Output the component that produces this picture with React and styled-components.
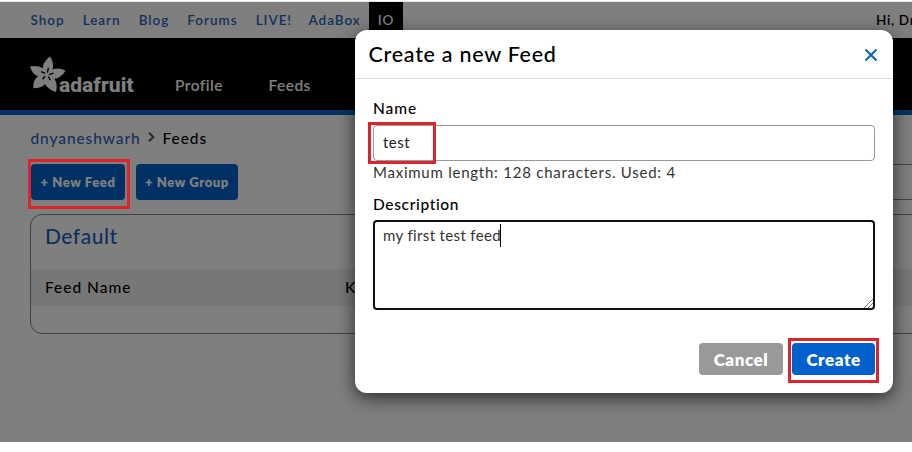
import React from 'react';
import styled, { createGlobalStyle } from 'styled-components';

const GlobalStyle = createGlobalStyle`
  * { box-sizing: border-box; }
  body {
    margin: 0;
    background: #fff;
    overflow: hidden;
    font-family: Lato, "Open Sans", sans-serif;
    font-weight: 500;
    color: #000;
  }
`;

const Window = styled.div`
  position: relative;
  width: 912px;
  height: 452px;
  overflow: hidden;
  padding-top: 2px;
  background: linear-gradient(#fff 1px, #e3e5e8 1px, #e3e5e8 2px, #fff 2px);
`;

const Page = styled.div`
  height: 440px;
  background: #fff;
`;

const TopBar = styled.nav`
  display: flex;
  align-items: stretch;
  height: 36px;
  padding-left: 30.5px;
  font-size: 13.5px;
  font-weight: 600;
  line-height: 37px;
  letter-spacing: 0.95px;
  white-space: nowrap;
`;

const TopLink = styled.a`
  margin-right: 18.2px;
  color: #2a62b4;

  &:nth-of-type(5) {
    margin-right: 16.5px;
  }

  &:last-of-type {
    margin-right: 0;
  }
`;

const TopActive = styled.span`
  width: 34px;
  margin-left: 8px;
  padding-left: 9px;
  background: #000;
  color: #fff;
`;

const Greeting = styled.span`
  margin-left: auto;
  width: 36px;
  overflow: hidden;
  letter-spacing: 0.7px;
`;

const Header = styled.header`
  display: flex;
  height: 77px;
  padding-left: 30px;
  background: #000;
  border-bottom: 5px solid #0066c8;
`;

const Logo = styled.div`
  display: flex;
  width: 145px;
  padding-top: 18px;
  color: #fff;
`;

const LogoText = styled.span`
  margin: 17px 0 0 -8px;
  font: 800 21px/24px Roboto, sans-serif;
  letter-spacing: 0.05px;
`;

const HeaderLink = styled.a`
  width: 93.5px;
  padding-top: 37px;
  color: #fff;
  font-size: 15.5px;
  font-weight: 600;
  line-height: 20px;
  letter-spacing: 0.45px;
`;

const Breadcrumb = styled.div`
  display: flex;
  align-items: center;
  height: 49px;
  padding: 0 0 3px 30.5px;
  font-size: 15.5px;
  letter-spacing: 0.9px;

  svg { margin: 0 7px 2px 6px; }
`;

const CrumbLink = styled.a`
  color: #2a62b4;
`;

const Actions = styled.div`
  display: flex;
  gap: 11px;
  height: 35px;
  padding-left: 31px;
`;

const ActionButton = styled.button`
  width: ${(p) => p.$width}px;
  height: 36px;
  padding: 0;
  border: 0;
  border-radius: 4px;
  background: #0061c8;
  color: #fff;
  font: 800 13px/37px Lato, sans-serif;
  letter-spacing: 0.6px;
  white-space: nowrap;
`;

const SearchField = styled.div`
  width: 240px;
  height: 36px;
  margin-left: auto;
  border: 1px solid #8b8b8b;
  border-right: 0;
`;

const Panel = styled.section`
  height: 120px;
  margin: 15px -20px 0 30px;
  border: 1px solid #858585;
  border-radius: 12px;
`;

const PanelTitle = styled.h2`
  height: 54px;
  margin: 0;
  padding-left: 14px;
  color: #1a60b8;
  font-size: 21px;
  font-weight: 500;
  line-height: 41px;
  letter-spacing: 0.5px;
`;

const TableHead = styled.div`
  display: grid;
  grid-template-columns: 300px 1fr;
  height: 37px;
  padding-left: 14px;
  background: #efefef;
  font-size: 15.5px;
  line-height: 37px;
  letter-spacing: 1px;
`;

const Backdrop = styled.div`
  position: absolute;
  inset: 2px 0 10px;
  background: rgba(0, 0, 0, 0.5);
`;

const Dialog = styled.div`
  position: absolute;
  left: 355px;
  top: 30px;
  width: 538px;
  height: 363px;
  border-radius: 12px;
  background: #fff;
  box-shadow: 0 5px 18px rgba(0, 0, 0, 0.65);
`;

const DialogHeader = styled.div`
  display: flex;
  justify-content: space-between;
  height: 49px;
  padding: 0 15px 0 13.5px;
  border-bottom: 1px solid #dfdfdf;

  svg { margin-top: 18px; }
`;

const DialogTitle = styled.h1`
  margin: 0;
  font-size: 21.5px;
  font-weight: 500;
  line-height: 48px;
  letter-spacing: 0.73px;
`;

const Form = styled.div`
  display: flex;
  flex-direction: column;
  padding: 19px 18px 0;
`;

const Label = styled.label`
  height: ${(p) => p.$height}px;
  font-size: 15.5px;
  line-height: 20px;
  letter-spacing: ${(p) => p.$track}px;
`;

const Input = styled.div`
  height: 36px;
  padding-left: 9px;
  border: 1px solid #999;
  border-radius: 4px;
  color: #222;
  font-size: 15px;
  font-weight: 400;
  line-height: 33px;
  letter-spacing: 0.5px;
`;

const Hint = styled.div`
  height: 33px;
  color: #333;
  font-size: 15px;
  font-weight: 400;
  line-height: 23px;
  letter-spacing: 0.76px;
`;

const TextArea = styled.div`
  display: flex;
  justify-content: space-between;
  height: 90px;
  padding-left: 8px;
  border: 2px solid #101010;
  border-radius: 4px;
  color: #333;
  font-size: 15px;
  font-weight: 400;
  line-height: 27px;
  letter-spacing: 0.36px;

  svg { align-self: flex-end; }
`;

const Typed = styled.span`
  display: flex;
  align-self: flex-start;
  align-items: flex-start;

  &::after {
    content: "";
    width: 1px;
    height: 23px;
    margin: 2px 0 0 -1px;
    background: #000;
  }
`;

const Footer = styled.div`
  display: flex;
  justify-content: flex-end;
  gap: 9px;
  padding: 33px 18px 0;
`;

const DialogButton = styled.button`
  width: ${(p) => p.$width}px;
  height: 32px;
  padding: 0;
  border: 0;
  border-radius: 4px;
  background: ${(p) => (p.$primary ? '#0061cc' : '#999')};
  color: #fff;
  font: 800 17px/33px Lato, sans-serif;
  letter-spacing: 0.55px;
`;

const Marker = styled.div`
  position: absolute;
  left: ${(p) => p.$x}px;
  top: ${(p) => p.$y}px;
  width: ${(p) => p.$w}px;
  height: ${(p) => p.$h}px;
  border: 3px solid #dc242d;
`;

const Flower = () => (
  <svg width="37" height="37" viewBox="0 0 37 37" fill="currentColor">
    <path d="M20 .5C15.500 4 12.800 8 13 12.200 8.500 9.700 4.500 9.500 0 10.500 1.500 15.500 4 18.700 8 20.200 4 23.500 3 27.500 3.500 32.300 8.500 32.300 12.500 31 15 28 17.500 32 21 34.500 26 36 27.500 31 26.700 26.500 24.500 22.800 29 22.300 32.500 19.300 35.500 14.700 31 12.200 26.500 11.700 22.500 13.500 24 9 22.500 4 20 .5Z" />
    <g stroke="#000" strokeWidth="1.350" strokeLinecap="round">
      <path d="M17.500 16l.8-3.500M19.500 18.300l3.500-1M18.500 20.800l1.600 2.800M14.800 20.500l-1.900 2.300M14.600 17.200l-3-1.400" />
    </g>
  </svg>
);

const Chevron = () => (
  <svg width="9" height="10" viewBox="0 0 9 10" fill="none" stroke="#555" strokeWidth="2.100">
    <path d="M2 .8L6.300 5 2 9.200" />
  </svg>
);

const Close = () => (
  <svg width="14" height="14" viewBox="0 0 14 14" fill="none" stroke="#0a62b8" strokeWidth="2">
    <path d="M1.500 1.500l11 11M12.500 1.500l-11 11" />
  </svg>
);

const ResizeGrip = () => (
  <svg width="10" height="9" viewBox="0 0 10 9" fill="none" stroke="#777" strokeWidth="1">
    <path d="M1 9L10 0M5 9l5-5" />
  </svg>
);

export default function App() {
  return (
    <>
      <GlobalStyle />
      <Window>
        <Page>
          <TopBar>
            {['Shop', 'Learn', 'Blog', 'Forums', 'LIVE!', 'AdaBox'].map((name) => (
              <TopLink key={name}>{name}</TopLink>
            ))}
            <TopActive>IO</TopActive>
            <Greeting>Hi, Dn</Greeting>
          </TopBar>
          <Header>
            <Logo>
              <Flower />
              <LogoText>adafruit</LogoText>
            </Logo>
            <HeaderLink>Profile</HeaderLink>
            <HeaderLink>Feeds</HeaderLink>
          </Header>
          <Breadcrumb>
            <CrumbLink>dnyaneshwarh</CrumbLink>
            <Chevron />
            <span>Feeds</span>
          </Breadcrumb>
          <Actions>
            <ActionButton $width={94}>+ New Feed</ActionButton>
            <ActionButton $width={102}>+ New Group</ActionButton>
            <SearchField />
          </Actions>
          <Panel>
            <PanelTitle>Default</PanelTitle>
            <TableHead>
              <span>Feed Name</span>
              <span>K</span>
            </TableHead>
          </Panel>
        </Page>
        <Backdrop />
        <Dialog>
          <DialogHeader>
            <DialogTitle>Create a new Feed</DialogTitle>
            <Close />
          </DialogHeader>
          <Form>
            <Label $height={27} $track={0.9}>Name</Label>
            <Input>test</Input>
            <Hint>Maximum length: 128 characters. Used: 4</Hint>
            <Label $height={26} $track={0.65}>Description</Label>
            <TextArea>
              <Typed>my first test feed</Typed>
              <ResizeGrip />
            </TextArea>
          </Form>
          <Footer>
            <DialogButton $width={84}>Cancel</DialogButton>
            <DialogButton $width={83} $primary>Create</DialogButton>
          </Footer>
        </Dialog>
        <Marker $x={28} $y={159} $w={102} $h={50} />
        <Marker $x={368} $y={122} $w={68} $h={42} />
        <Marker $x={788} $y={338} $w={91} $h={45} />
      </Window>
    </>
  );
}
